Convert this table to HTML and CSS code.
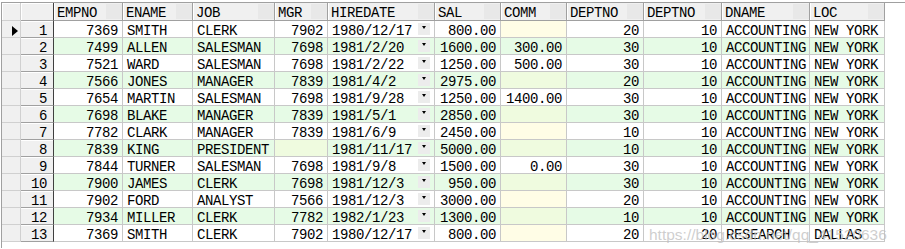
FILE: index.html
```html
<!DOCTYPE html>
<html>
<head>
<meta charset="utf-8">
<link rel="stylesheet" href="styles.css">
</head>
<body>
<div class="grid">
  <div class="row head">
    <div class="h ind"></div><div class="h rn"></div>
    <div class="h">EMPNO</div><div class="h">ENAME</div><div class="h">JOB</div><div class="h">MGR</div><div class="h">HIREDATE</div><div class="h">SAL</div><div class="h">COMM</div><div class="h">DEPTNO</div><div class="h">DEPTNO</div><div class="h">DNAME</div><div class="h">LOC</div>
  </div>
  <div class="row">
    <div class="ind"><span class="arrow"></span></div><div class="rn">1</div>
    <div class="c n">7369</div><div class="c">SMITH</div><div class="c">CLERK</div><div class="c n">7902</div><div class="c d">1980/12/17<span class="dd"></span></div><div class="c n">800.00</div><div class="c n null"></div><div class="c n">20</div><div class="c n">10</div><div class="c">ACCOUNTING</div><div class="c">NEW YORK</div>
  </div>
  <div class="row alt">
    <div class="ind"></div><div class="rn">2</div>
    <div class="c n">7499</div><div class="c">ALLEN</div><div class="c">SALESMAN</div><div class="c n">7698</div><div class="c d">1981/2/20<span class="dd"></span></div><div class="c n">1600.00</div><div class="c n">300.00</div><div class="c n">30</div><div class="c n">10</div><div class="c">ACCOUNTING</div><div class="c">NEW YORK</div>
  </div>
  <div class="row">
    <div class="ind"></div><div class="rn">3</div>
    <div class="c n">7521</div><div class="c">WARD</div><div class="c">SALESMAN</div><div class="c n">7698</div><div class="c d">1981/2/22<span class="dd"></span></div><div class="c n">1250.00</div><div class="c n">500.00</div><div class="c n">30</div><div class="c n">10</div><div class="c">ACCOUNTING</div><div class="c">NEW YORK</div>
  </div>
  <div class="row alt">
    <div class="ind"></div><div class="rn">4</div>
    <div class="c n">7566</div><div class="c">JONES</div><div class="c">MANAGER</div><div class="c n">7839</div><div class="c d">1981/4/2<span class="dd"></span></div><div class="c n">2975.00</div><div class="c n null"></div><div class="c n">20</div><div class="c n">10</div><div class="c">ACCOUNTING</div><div class="c">NEW YORK</div>
  </div>
  <div class="row">
    <div class="ind"></div><div class="rn">5</div>
    <div class="c n">7654</div><div class="c">MARTIN</div><div class="c">SALESMAN</div><div class="c n">7698</div><div class="c d">1981/9/28<span class="dd"></span></div><div class="c n">1250.00</div><div class="c n">1400.00</div><div class="c n">30</div><div class="c n">10</div><div class="c">ACCOUNTING</div><div class="c">NEW YORK</div>
  </div>
  <div class="row alt">
    <div class="ind"></div><div class="rn">6</div>
    <div class="c n">7698</div><div class="c">BLAKE</div><div class="c">MANAGER</div><div class="c n">7839</div><div class="c d">1981/5/1<span class="dd"></span></div><div class="c n">2850.00</div><div class="c n null"></div><div class="c n">30</div><div class="c n">10</div><div class="c">ACCOUNTING</div><div class="c">NEW YORK</div>
  </div>
  <div class="row">
    <div class="ind"></div><div class="rn">7</div>
    <div class="c n">7782</div><div class="c">CLARK</div><div class="c">MANAGER</div><div class="c n">7839</div><div class="c d">1981/6/9<span class="dd"></span></div><div class="c n">2450.00</div><div class="c n null"></div><div class="c n">10</div><div class="c n">10</div><div class="c">ACCOUNTING</div><div class="c">NEW YORK</div>
  </div>
  <div class="row alt">
    <div class="ind"></div><div class="rn">8</div>
    <div class="c n">7839</div><div class="c">KING</div><div class="c">PRESIDENT</div><div class="c n null"></div><div class="c d">1981/11/17<span class="dd"></span></div><div class="c n">5000.00</div><div class="c n null"></div><div class="c n">10</div><div class="c n">10</div><div class="c">ACCOUNTING</div><div class="c">NEW YORK</div>
  </div>
  <div class="row">
    <div class="ind"></div><div class="rn">9</div>
    <div class="c n">7844</div><div class="c">TURNER</div><div class="c">SALESMAN</div><div class="c n">7698</div><div class="c d">1981/9/8<span class="dd"></span></div><div class="c n">1500.00</div><div class="c n">0.00</div><div class="c n">30</div><div class="c n">10</div><div class="c">ACCOUNTING</div><div class="c">NEW YORK</div>
  </div>
  <div class="row alt">
    <div class="ind"></div><div class="rn">10</div>
    <div class="c n">7900</div><div class="c">JAMES</div><div class="c">CLERK</div><div class="c n">7698</div><div class="c d">1981/12/3<span class="dd"></span></div><div class="c n">950.00</div><div class="c n null"></div><div class="c n">30</div><div class="c n">10</div><div class="c">ACCOUNTING</div><div class="c">NEW YORK</div>
  </div>
  <div class="row">
    <div class="ind"></div><div class="rn">11</div>
    <div class="c n">7902</div><div class="c">FORD</div><div class="c">ANALYST</div><div class="c n">7566</div><div class="c d">1981/12/3<span class="dd"></span></div><div class="c n">3000.00</div><div class="c n null"></div><div class="c n">20</div><div class="c n">10</div><div class="c">ACCOUNTING</div><div class="c">NEW YORK</div>
  </div>
  <div class="row alt">
    <div class="ind"></div><div class="rn">12</div>
    <div class="c n">7934</div><div class="c">MILLER</div><div class="c">CLERK</div><div class="c n">7782</div><div class="c d">1982/1/23<span class="dd"></span></div><div class="c n">1300.00</div><div class="c n null"></div><div class="c n">10</div><div class="c n">10</div><div class="c">ACCOUNTING</div><div class="c">NEW YORK</div>
  </div>
  <div class="row">
    <div class="ind"></div><div class="rn">13</div>
    <div class="c n">7369</div><div class="c">SMITH</div><div class="c">CLERK</div><div class="c n">7902</div><div class="c d">1980/12/17<span class="dd"></span></div><div class="c n">800.00</div><div class="c n null"></div><div class="c n">20</div><div class="c n">20</div><div class="c">RESEARCH</div><div class="c">DALLAS</div>
  </div>
  <div class="watermark">https://blog.csdn.net/qq_41520636</div>
</div>
</body>
</html>
```
FILE: styles.css
```css
html, body {
  margin: 0;
  padding: 0;
  background: #ffffff;
}
body {
  font-family: "Liberation Mono", "DejaVu Sans Mono", monospace;
  font-size: 14px;
  letter-spacing: -0.4px;
  color: #000;
}
.grid {
  position: relative;
  margin: 2px 0 0 1px;
  border-top: 1px solid #a0a0a0;
  border-left: 1px solid #a0a0a0;
  height: 246px;
  box-sizing: border-box;
}
.row {
  display: grid;
  grid-template-columns: 19px 33px 69px 70px 82px 53px 107px 66px 66px 77px 78px 88px 75px;
  height: 17px;
}
.row.head {
  height: 18px;
}
.row > div {
  box-sizing: border-box;
  white-space: nowrap;
}
.h {
  position: relative;
  background: #f0f0f0;
  border-right: 1px solid #a0a0a0;
  border-bottom: 1px solid #a0a0a0;
  box-shadow: inset 1px 0 0 #ffffff;
  line-height: 14px;
  padding: 3px 0 0 3px;
}
.h.ind, .h.rn {
  box-shadow: inset 1px 1px 0 #ffffff;
}
.h.ind {
  border-right-color: #d0d0d0;
}
.h:not(.ind):not(.rn)::after {
  content: "";
  position: absolute;
  right: 0;
  top: 1px;
  width: 16px;
  height: 15px;
  background: #e8e8e8;
}
.h.rn {
  border-right: 1px solid #404040;
}
.ind {
  background: #f0f0f0;
  border-right: 1px solid #d0d0d0;
  border-bottom: 1px solid #d0d0d0;
  padding: 5px 0 0 10px;
}
.arrow {
  display: block;
  width: 0;
  height: 0;
  border-top: 5px solid transparent;
  border-bottom: 5px solid transparent;
  border-left: 6px solid #000;
}
.rn {
  background: #f0f0f0;
  border-right: 1px solid #404040;
  border-bottom: 1px solid #a0a0a0;
  box-shadow: inset 0 1px 0 #ffffff;
  text-align: right;
  padding: 4px 6px 0 0;
  line-height: 12px;
}
.c {
  position: relative;
  background: #ffffff;
  border-right: 1px solid #c8c8c8;
  border-bottom: 1px solid #c8c8c8;
  line-height: 12px;
  padding: 4px 0 0 4px;
}
.c.n {
  text-align: right;
  padding: 4px 4px 0 0;
}
.alt .c {
  background: #e6fbe6;
}
.c.null {
  background: #fffde6;
}
.alt .c.null {
  background: #effbdf;
}
.dd {
  position: absolute;
  top: 2px;
  right: 4px;
  width: 12px;
  height: 12px;
  background: #ececec;
}
.dd::after {
  content: "";
  position: absolute;
  left: 4px;
  top: 3px;
  border-left: 2.5px solid transparent;
  border-right: 2.5px solid transparent;
  border-top: 3px solid #000;
}
.watermark {
  position: absolute;
  left: 647px;
  top: 223px;
  font-family: "Liberation Sans", Arial, sans-serif;
  font-size: 15.5px;
  letter-spacing: 0;
  color: rgba(190, 190, 190, 0.75);
  pointer-events: none;
}
```
